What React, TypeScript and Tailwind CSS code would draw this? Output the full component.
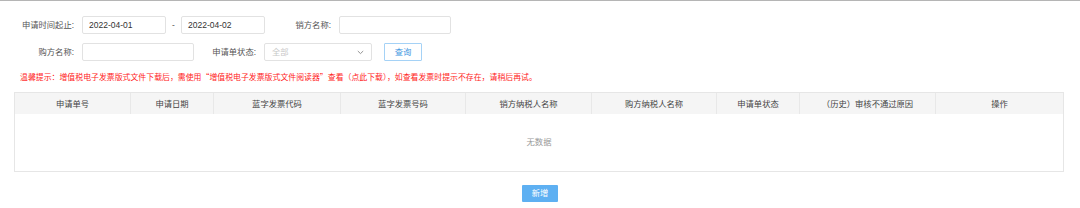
import React from "react";

const cols = [
  { w: "w-[116px]", t: "申请单号" },
  { w: "w-[83px]", t: "申请日期" },
  { w: "w-[127px]", t: "蓝字发票代码" },
  { w: "w-[125px]", t: "蓝字发票号码" },
  { w: "w-[126px]", t: "销方纳税人名称" },
  { w: "w-[125px]", t: "购方纳税人名称" },
  { w: "w-[83px]", t: "申请单状态" },
  { w: "w-[136px]", t: "（历史）审核不通过原因" },
  { w: "flex-1", t: "操作" },
];

export default function App() {
  return (
    <div className="w-[1080px] h-[208px] bg-white border-t border-[#b5b5b5] font-['Liberation_Sans','Noto_Sans_CJK_SC',sans-serif] text-[8.3px] text-[#555] overflow-hidden">
      <div className="pt-[15px]">
        {/* Row 1 */}
        <div className="flex items-center h-[18px]">
          <div className="w-[74px] text-right">申请时间起止:</div>
          <div className="ml-[8px] w-[84px] h-[18px] border border-[#e2e2e2] rounded-[2px] pl-[6px] flex items-center text-[8.5px] text-[#333]">2022-04-01</div>
          <div className="w-[15px] text-center">-</div>
          <div className="w-[84px] h-[18px] border border-[#e2e2e2] rounded-[2px] pl-[6px] flex items-center text-[8.5px] text-[#333]">2022-04-02</div>
          <div className="w-[66px] text-right">销方名称:</div>
          <div className="ml-[8px] w-[112px] h-[18px] border border-[#e2e2e2] rounded-[2px]"></div>
        </div>
        {/* Row 2 */}
        <div className="flex items-center h-[18px] mt-[9px]">
          <div className="w-[74px] text-right">购方名称:</div>
          <div className="ml-[8px] w-[112px] h-[18px] border border-[#e2e2e2] rounded-[2px]"></div>
          <div className="w-[62px] text-right">申请单状态:</div>
          <div className="ml-[8px] w-[108px] h-[18px] border border-[#e2e2e2] rounded-[2px] pl-[7px] pr-[7px] flex items-center justify-between">
            <span className="text-[#c8c8c8]">全部</span>
            <svg width="7" height="5" viewBox="0 0 7 5" fill="none">
              <path d="M0.8 1 L3.5 3.6 L6.2 1" stroke="#888" strokeWidth="0.9" />
            </svg>
          </div>
          <div className="ml-[12px] w-[38px] h-[18px] border border-[#a5d2f6] rounded-[1px] flex items-center justify-center text-[#3d95e0]">查询</div>
        </div>
        {/* Warning */}
        <div className="mt-[10px] h-[12px] leading-[12px] pl-[20px] text-[#ff1a1a] text-[7.9px] whitespace-nowrap font-['Noto_Sans_CJK_SC',sans-serif]">
          温馨提示：增值税电子发票版式文件下载后，需使用“增值税电子发票版式文件阅读器”查看（点此下载），如查看发票时提示不存在，请稍后再试。
        </div>
        {/* Table */}
        <div className="mt-[9px] ml-[14px] w-[1050px] border border-[#e6e6e6]">
          <div className="flex h-[21px] bg-[#f5f5f5] text-[#444]">
            {cols.map((c, i) => (
              <div
                key={i}
                className={`${c.w} flex items-center justify-center font-['Noto_Sans_CJK_SC',sans-serif] ${i < cols.length - 1 ? "border-r border-[#e8e8e8]" : ""}`}
              >
                {c.t}
              </div>
            ))}
          </div>
          <div className="h-[57px] flex items-center justify-center text-[#999]">无数据</div>
        </div>
        {/* Add button */}
        <div className="flex justify-center mt-[13px]">
          <div className="w-[36px] h-[17px] bg-[#5eb0f2] text-white flex items-center justify-center rounded-[1px]">新增</div>
        </div>
      </div>
    </div>
  );
}
